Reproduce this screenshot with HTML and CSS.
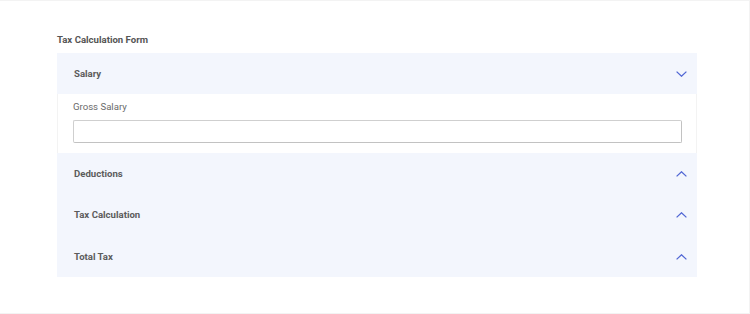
FILE: index.html
```html
<!DOCTYPE html>
<html>
<head>
<meta charset="utf-8">
<link rel="stylesheet" href="styles.css">
</head>
<body>
<div class="frame">
  <div class="title">Tax Calculation Form</div>
  <div class="accordion">
    <div class="section open">
      <div class="header">
        <span class="label">Salary</span>
        <svg class="chev" width="11" height="6" viewBox="0 0 11 6"><path d="M0.6 0.6 L5.5 5.2 L10.4 0.6" fill="none" stroke="#5066d4" stroke-width="1.3"/></svg>
      </div>
      <div class="body">
        <label class="field-label" for="gross">Gross Salary</label>
        <input id="gross" class="field-input" type="text">
      </div>
    </div>
    <div class="section">
      <div class="header">
        <span class="label">Deductions</span>
        <svg class="chev" width="11" height="6" viewBox="0 0 11 6"><path d="M0.6 5.4 L5.5 0.8 L10.4 5.4" fill="none" stroke="#5066d4" stroke-width="1.3"/></svg>
      </div>
    </div>
    <div class="section">
      <div class="header">
        <span class="label">Tax Calculation</span>
        <svg class="chev" width="11" height="6" viewBox="0 0 11 6"><path d="M0.6 5.4 L5.5 0.8 L10.4 5.4" fill="none" stroke="#5066d4" stroke-width="1.3"/></svg>
      </div>
    </div>
    <div class="section">
      <div class="header">
        <span class="label">Total Tax</span>
        <svg class="chev" width="11" height="6" viewBox="0 0 11 6"><path d="M0.6 5.4 L5.5 0.8 L10.4 5.4" fill="none" stroke="#5066d4" stroke-width="1.3"/></svg>
      </div>
    </div>
  </div>
</div>
</body>
</html>
```
FILE: styles.css
```css
html, body {
  margin: 0;
  padding: 0;
  background: #ffffff;
}
body {
  font-family: Roboto, "Liberation Sans", sans-serif;
}
.frame {
  box-sizing: border-box;
  width: 750px;
  height: 314px;
  border: 1px solid #f3f3f3;
  border-left: none;
  padding: 33px 52px 0 57px;
}
.title {
  font-size: 9.6px;
  line-height: 12px;
  font-weight: 700;
  color: #555555;
  margin-bottom: 7px;
}
.accordion {
  display: flex;
  flex-direction: column;
}
.header {
  box-sizing: border-box;
  height: 41.3px;
  background: #f3f6fd;
  display: flex;
  align-items: center;
  justify-content: space-between;
  padding: 0 10px 0 17px;
}
.label {
  font-size: 9.6px;
  line-height: 12px;
  font-weight: 700;
  color: #5c5c5c;
}
.chev {
  display: block;
}
.body {
  background: #ffffff;
  border-left: 1px solid #f3f3f3;
  border-right: 1px solid #f3f3f3;
  padding: 7px 14px 10px 15px;
  display: flex;
  flex-direction: column;
}
.field-label {
  font-size: 9.6px;
  line-height: 12px;
  color: #6a6a6a;
  margin-bottom: 7px;
}
.field-input {
  box-sizing: border-box;
  height: 23px;
  width: 100%;
  border: 1px solid #cfcfcf;
  border-right-color: #c2c2c2;
  border-bottom-color: #c2c2c2;
  border-radius: 2px;
  margin: 0;
  padding: 0 6px;
  background: #ffffff;
}
```
